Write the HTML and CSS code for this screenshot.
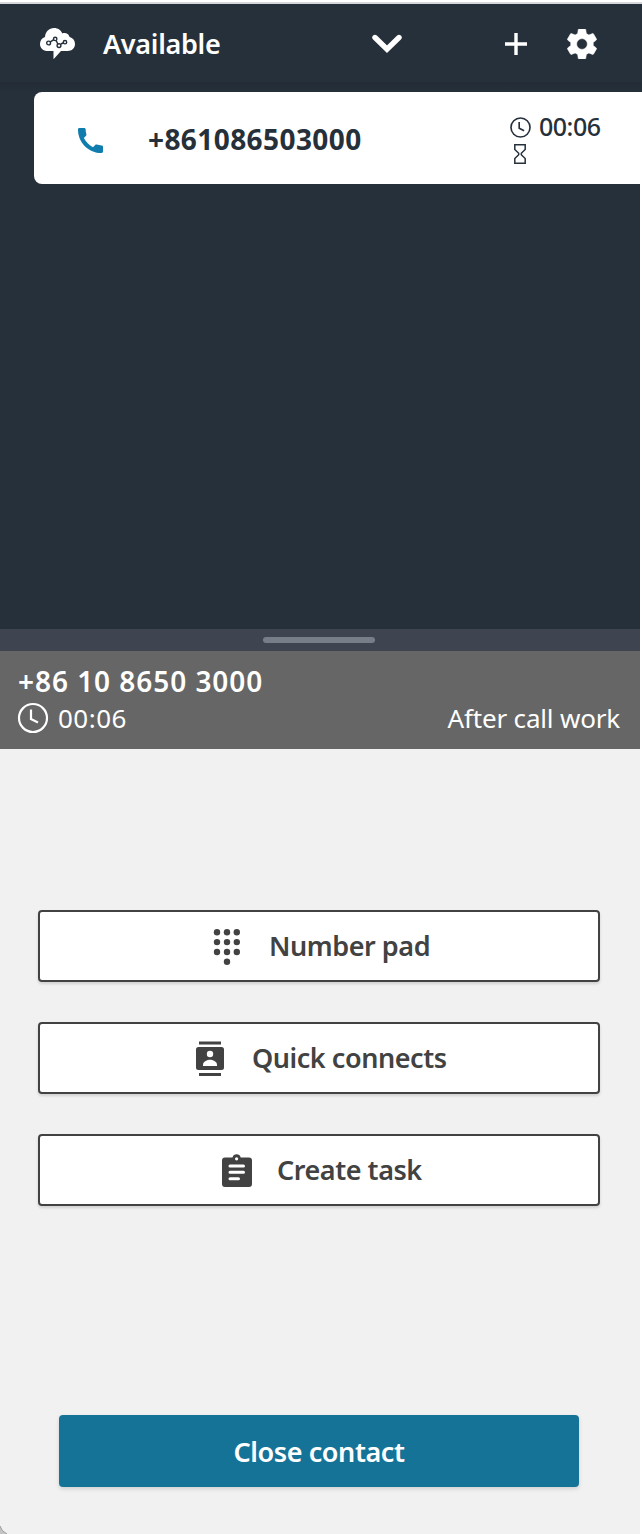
FILE: index.html
```html
<!DOCTYPE html>
<html lang="en">
<head>
<meta charset="utf-8">
<title>Contact Control Panel</title>
<link rel="stylesheet" href="styles.css">
</head>
<body>
<main class="panel">
  <header class="topbar">
    <svg class="logo" viewBox="0 0 36 32" width="36" height="32">
      <path fill="#fff" d="M8 23C3 23 0 19.800 0 15.900 0 12.500 2 10 5 9 5.500 3.500 9 0 14 0c4 0 7 2.200 8.300 5.500 3.200-1.200 6.500.5 7.300 3.500C33 10 35 12.600 35 16c0 4.200-3 7-7.500 7H21l-7.500 8.200V23z"/>
      <g fill="none" stroke="#26303b" stroke-width="1.400"><path d="m10 14.200 3.700-2.500m2.300.6 2 4.100m3-.4 3-1.500"/><circle cx="8.600" cy="15" r="1.900"/><circle cx="15.200" cy="10.900" r="1.700"/><circle cx="19" cy="17.600" r="1.900"/><circle cx="25" cy="14.200" r="1.700"/></g>
    </svg>
    <span class="status">Available</span>
    <svg class="chevron" viewBox="0 0 30 20" width="30" height="20"><path d="m3 3.500 12 11.700L27 3.500" fill="none" stroke="#fff" stroke-width="5.400" stroke-linecap="round"/></svg>
    <svg class="plus" viewBox="0 0 22 22" width="22" height="22"><path d="M11 0v22M0 11h22" stroke="#fff" stroke-width="3.400"/></svg>
    <svg class="gear" viewBox="2 2 20 20" width="30" height="30"><path fill="#fff" stroke="#fff" stroke-width=".4" d="M19.430 12.980c.04-.32.070-.64.070-.98s-.03-.66-.07-.98l2.110-1.650c.19-.15.240-.42.120-.64l-2-3.460c-.12-.22-.39-.3-.61-.22l-2.490 1c-.52-.4-1.080-.73-1.690-.98l-.38-2.650C14.460 2.180 14.250 2 14 2h-4c-.25 0-.46.180-.49.420l-.38 2.650c-.61.250-1.170.59-1.690.98l-2.490-1c-.23-.09-.49 0-.61.220l-2 3.460c-.13.220-.07.490.12.640l2.110 1.650c-.04.320-.07.650-.07.980s.03.660.07.980l-2.110 1.650c-.19.150-.24.420-.12.640l2 3.460c.12.220.39.300.61.220l2.490-1c.52.400 1.080.73 1.690.98l.38 2.650c.03.240.24.420.49.420h4c.25 0 .46-.18.490-.42l.38-2.650c.61-.25 1.170-.59 1.690-.98l2.490 1c.23.090.49 0 .61-.22l2-3.460c.12-.22.070-.49-.12-.64zM12 15.600a3.600 3.600 0 1 1 0-7.200 3.600 3.600 0 0 1 0 7.200z"/></svg>
  </header>
  <div class="shade"></div>
  <section class="contacts">
    <article class="contact-card">
      <svg class="phone" viewBox="3 3 18 18" width="25" height="25"><path fill="#107dae" d="M7.500 3H4c-.55 0-1 .45-1 1 0 9.390 7.610 17 17 17 .55 0 1-.45 1-1v-3.490c0-.55-.45-1-1-1-1.250 0-2.450-.2-3.570-.57-.35-.11-.75-.03-1.020.24l-1.600 1.600c-2.830-1.440-5.150-3.750-6.590-6.590l1.600-1.600c.27-.27.350-.67.240-1.020C8.700 6.450 8.500 5.250 8.500 4c0-.55-.45-1-1-1z"/></svg>
      <span class="card-number">+861086503000</span>
      <div class="timers">
        <div class="timer">
          <svg class="clock" viewBox="0 0 32 32" width="21" height="21" fill="none" stroke="#26303b" stroke-width="2.500"><circle cx="16" cy="16" r="14.500"/><path d="M14 7.500v9.500l7.500 4"/></svg>
          <span class="card-time">00:06</span>
        </div>
        <svg class="hourglass" viewBox="0 0 12 20" width="12" height="20" fill="none" stroke="#26303b" stroke-width="1.500"><path d="M.8.8h10.400v4.700L7.300 9.200v1.600l3.900 3.700v4.700H.8v-4.700l3.900-3.700V9.200L.8 5.500z"/></svg>
      </div>
    </article>
  </section>
  <div class="divider"><div class="handle"></div></div>
  <section class="summary">
    <div class="caller">+86 10 8650 3000</div>
    <div class="state-row">
      <svg viewBox="0 0 32 32" width="32" height="32" fill="none" stroke="#fff" stroke-width="2.200"><circle cx="16" cy="16" r="14"/><path d="M14 7.500v9.500l7 3.500"/></svg>
      <span class="elapsed">00:06</span>
      <span class="state">After call work</span>
    </div>
  </section>
  <section class="actions">
    <button class="action pad">
      <svg viewBox="0 0 28 36" width="28" height="36" fill="#424242"><circle cx="4" cy="3.300" r="3.200"/><circle cx="14" cy="3.300" r="3.200"/><circle cx="23.800" cy="3.300" r="3.200"/><circle cx="4" cy="13.100" r="3.200"/><circle cx="14" cy="13.100" r="3.200"/><circle cx="23.800" cy="13.100" r="3.200"/><circle cx="4" cy="23" r="3.200"/><circle cx="14" cy="23" r="3.200"/><circle cx="23.800" cy="23" r="3.200"/><circle cx="14" cy="32.700" r="3.200"/></svg>
      <span>Number pad</span>
    </button>
    <button class="action quick">
      <svg viewBox="0 0 28 36" width="28" height="36"><path fill="#424242" d="M3 .5h22v3H3zM3 32h22v3H3zM2.500 6h23A2.500 2.500 0 0 1 28 8.500v18a2.500 2.500 0 0 1-2.500 2.500h-23A2.500 2.500 0 0 1 0 26.500v-18A2.500 2.500 0 0 1 2.500 6z"/><g fill="#fff"><circle cx="14" cy="13" r="3.200"/><path d="M7 25v-1.500c0-3 4.500-4.700 7-4.700s7 1.700 7 4.700V25z"/></g></svg>
      <span>Quick connects</span>
    </button>
    <button class="action task">
      <svg viewBox="0 0 30 34" width="30" height="34"><path fill="#424242" d="M3 3.500h7.500C11 1.500 12.600.3 14.600.3s3.600 1.200 4.100 3.200H27a3 3 0 0 1 3 3V30a3 3 0 0 1-3 3H3a3 3 0 0 1-3-3V6.500a3 3 0 0 1 3-3z"/><circle cx="14.600" cy="4.800" r="1.600" fill="#fff"/><path d="M8 12h13.500M8 18.300h13.500M8 24.700h8.500" stroke="#fff" stroke-width="3" stroke-linecap="round"/></svg>
      <span>Create task</span>
    </button>
  </section>
  <footer class="footer">
    <button class="close-contact"><span>Close contact</span></button>
    <svg class="corner" viewBox="0 0 7 8" width="7" height="8"><path d="M0 0Q1 5 7 8H0z" fill="#c4c4c4"/><path d="M0 0Q1 5 7 8" fill="none" stroke="#999"/></svg>
  </footer>
</main>
</body>
</html>
```
FILE: styles.css
```css
* { box-sizing: border-box; }
body { margin: 0; background: #fff; font-family: "Noto Sans", "Open Sans", sans-serif; font-size: 28px; line-height: 36px; }
svg { display: block; flex: none; }
span, .caller { white-space: nowrap; }
button { font: inherit; margin: 0; }
.panel { width: 642px; height: 1534px; padding-top: 2px; overflow: hidden; display: flex; flex-direction: column; }
.topbar { height: 80px; flex: none; border-top: 2px solid #d5d7da; background: #26303a; display: flex; align-items: center; padding: 0 45px 0 40px; }
.logo { margin-right: 27px; margin-top: 1px; }
.status { width: 118px; color: #fff; font-weight: 600; font-size: 27px; letter-spacing: -.3px; padding-top: 2px; }
.chevron { margin-left: 151px; margin-top: 2px; }
.plus { margin-left: 103px; margin-top: 2px; }
.gear { margin-left: 40px; margin-top: 2px; }
.shade { height: 10px; flex: none; background: linear-gradient(#222b36, #26303a); }
.contacts { height: 537px; flex: none; padding-left: 34px; background: #26303a; border-right: 2px solid #fff; }
.contact-card { width: 608px; height: 92px; background: #fff; border-radius: 8px 0 0 8px; display: flex; align-items: center; padding-left: 44px; }
.phone { margin-top: 4px; }
.card-number { margin-left: 45px; width: 214px; color: #26303a; font-weight: 700; letter-spacing: .42px; padding-top: 2px; }
.timers { margin: 4px 0 0 148px; color: #26303a; }
.timer { display: flex; align-items: center; height: 21px; }
.clock { margin-top: 1px; }
.card-time { margin-left: 8px; font-size: 25px; font-weight: 500; letter-spacing: -.5px; margin-top: -2px; }
.hourglass { margin: 6px 0 0 4px; }
.divider { width: 640px; height: 22px; flex: none; background: #3e4550; padding-top: 8px; }
.handle { width: 112px; height: 6px; border-radius: 3px; margin-left: 263px; background: #777e87; }
.summary { width: 640px; height: 98px; flex: none; background: #666; color: #fff; padding: 12px 20px 0 17px; }
.caller { font-weight: 600; letter-spacing: .95px; padding-left: 1px; }
.state-row { display: flex; align-items: center; height: 38px; font-size: 26px; }
.elapsed { margin-left: 9px; letter-spacing: .5px; }
.state { margin-left: auto; letter-spacing: -.18px; }
.actions { width: 640px; height: 609px; flex: none; background: #f1f1f1; padding: 161px 40px 0 38px; display: flex; flex-direction: column; gap: 40px; }
.action { height: 72px; background: #fff; border: 2px solid #424242; border-radius: 4px; box-shadow: 0 2px 3px #0002; color: #424242; font-weight: 600; font-size: 27px; letter-spacing: -.45px; display: flex; align-items: center; padding: 0; }
.action svg { margin-top: 1px; }
.pad { padding-left: 173px; gap: 28px; }
.quick { padding-left: 156px; gap: 28px; }
.task { padding-left: 182px; gap: 25px; }
.task svg { margin-top: 2px; }
.footer { position: relative; width: 640px; flex: 1; background: #f1f1f1; padding: 57px 61px 0 59px; }
.close-contact { width: 520px; height: 72px; border: 0; border-radius: 4px; background: #167398; color: #fff; font-weight: 600; font-size: 27px; letter-spacing: -.4px; padding: 2px 0 0; box-shadow: 0 2px 4px #0002; }
.corner { position: absolute; left: 0; bottom: 0; }
```
